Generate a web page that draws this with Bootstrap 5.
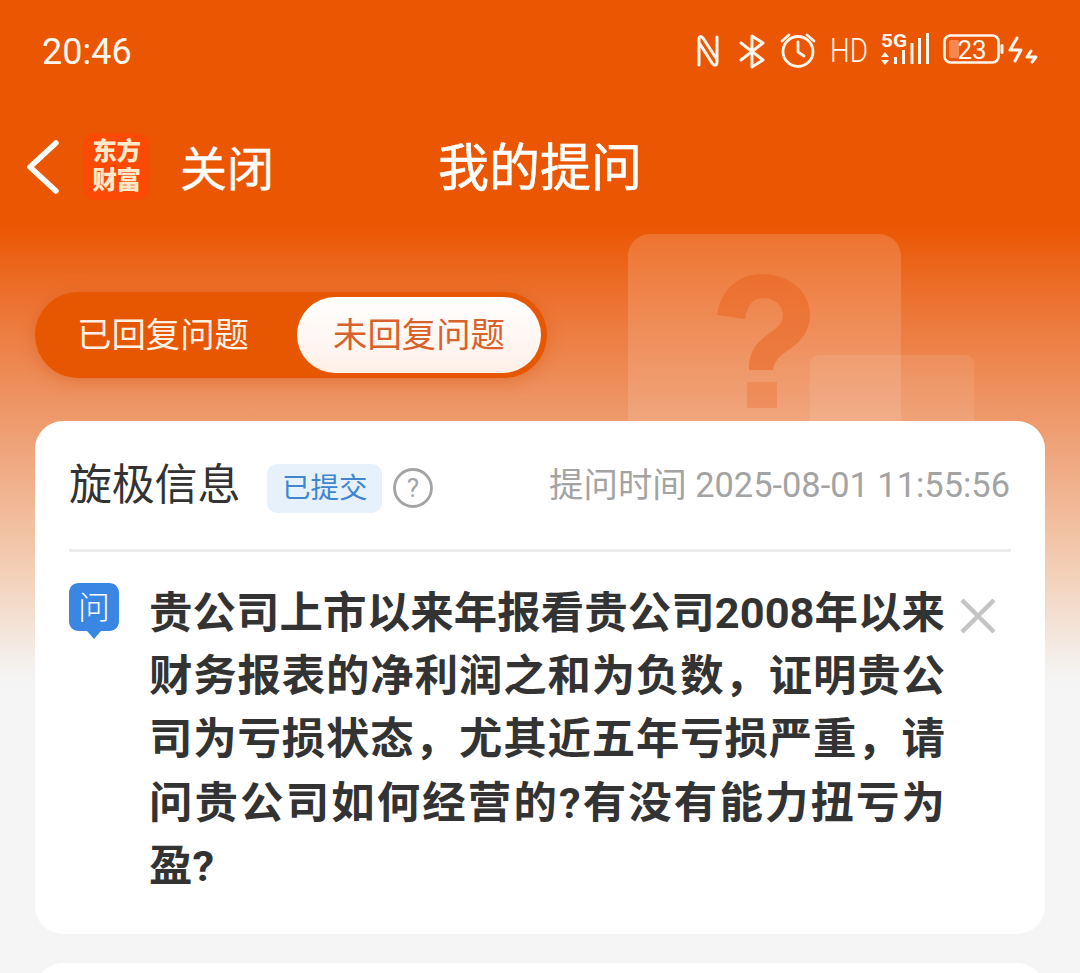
<!DOCTYPE html>
<html lang="zh-CN">
<head>
<meta charset="utf-8">
<title>我的提问</title>
<link rel="stylesheet" href="https://cdn.jsdelivr.net/npm/bootstrap@5.3.0/dist/css/bootstrap.min.css">
<style>
html,body{margin:0;height:973px;overflow:hidden;background:#f5f5f5}
body{font-family:Roboto,"Noto Sans CJK SC","Liberation Sans",sans-serif}
.screen{height:973px;position:relative;overflow:hidden;background:linear-gradient(180deg,#eb5602 0,#eb5602 225px,#ec7230 300px,#ee9a6c 420px,#f3cfb6 570px,#f4f2f0 670px,#f5f5f5 685px)}
.stat-bar{height:102px;padding:0 42px;color:#fff6ee}
.clock{font-size:36px;line-height:1;padding-top:2px}
.stat-svg{display:block;margin-top:-2px}
.title-row{height:135px;padding-bottom:6px;color:#fff;position:relative}
.back-ico{margin-left:27px;margin-right:24px;flex:none}
.app-logo{width:67px;height:67px;border-radius:13px;background:#fb4a06;color:#ffe9c8;font-size:24.5px;line-height:28.5px;font-weight:900;text-align:center;padding-top:5px;letter-spacing:-.5px;flex:none}
.close-txt{font-size:47px;line-height:1;margin-left:30px;margin-top:5px;font-weight:400;-webkit-text-stroke:.4px #fff}
.page-title{font-size:51px;line-height:1;position:absolute;left:438px;top:41px;font-weight:400;-webkit-text-stroke:.6px #fff}
.deco-wrap{position:absolute;left:628px;top:234px;width:346px;height:220px;pointer-events:none}
.switcher{margin:55px 0 0 35px;width:512px;height:86px;border-radius:43px;background:#e75600;box-shadow:0 3px 16px rgba(205,75,0,.35);padding:5px 6px 5px 42px;font-size:34.4px;position:relative}
.switch-off{color:#fff2e4;width:220px;line-height:76px}
.switch-on{width:244px;height:76px;border-radius:38px;background:linear-gradient(180deg,#fff,#fff0e8);color:#d9622c;line-height:76px;text-align:center}
.ask-card{margin:43px 35px 0;height:513px;border:0;border-radius:28px;background:#fff;padding:0 34px;position:relative}
.ask-head{height:131px;border-bottom:3px solid #ededed;padding-top:1px}
.ask-name{font-size:43px;color:#333;line-height:1;letter-spacing:-.2px}
.state-tag{margin:6px 0 0 27px;width:115px;height:49px;border-radius:10px;background:#e7f1fb;color:#3f86cf;font-size:28.5px;line-height:49px;text-align:center}
.help-ico{margin:4px 0 0 10px;flex:none}
.ask-time{font-size:34.4px;color:#a3a3a3;line-height:1;margin-left:auto;margin-right:1px;white-space:nowrap}
.ask-body{padding-top:31px}
.q-badge{width:50px;flex:none}
.q-txt{margin:-1px 0 0 30px;width:796px;flex:none;font-size:43.4px;line-height:63.2px;font-weight:700;color:#333;text-align:justify}
.q-close{margin-left:15px;margin-top:15px;flex:none}
.next-card{margin:29px 35px 0;height:100px;border:0;border-radius:28px 28px 0 0;background:#fff}
</style>
</head>
<body>
<div class="screen">
  <div class="deco-wrap">
    <svg width="346" height="220" viewBox="0 0 346 220">
      <defs>
        <linearGradient id="fadeA" x1="0" y1="0" x2="0" y2="1"><stop offset="0" stop-color="#fff" stop-opacity=".16"/><stop offset="1" stop-color="#fff" stop-opacity=".1"/></linearGradient>
      </defs>
      <rect x="0" y="0" width="273" height="240" rx="22" fill="url(#fadeA)"/>
      <path d="M89 81C93 54 112 40 134 40C161 40 182 57 182 81C182 99 171 109 159 117C149 124 145 130 145 138V136H121V134C121 119 127 110 139 101C149 94 155 90 155 81C155 71 146 64 135 64C124 64 119 73 117 85Z" fill="#ea6520" fill-opacity=".55"/>
      <rect x="119" y="148" width="30" height="26" fill="#ea6520" fill-opacity=".3"/>
      <rect x="182" y="121" width="164" height="130" rx="9" fill="#fff" fill-opacity=".09"/>
    </svg>
  </div>

  <div class="stat-bar d-flex align-items-center justify-content-between">
    <div class="clock">20:46</div>
    <svg class="stat-svg" width="344" height="40" viewBox="694 30 344 40" fill="none" stroke="#fff6ee" stroke-linecap="round" stroke-linejoin="round">
      <g stroke-width="3">
        <path d="M699 65V39C699 36 701 36 703 38L716 58"/>
        <path d="M717 37V62C717 66 714 66 712 63L700 44"/>
      </g>
      <path stroke-width="3" d="M741 43L763 60L752 67V36L763 43L741 60"/>
      <g stroke-width="2.800">
        <circle cx="798" cy="51.500" r="15"/>
        <path d="M798 42V52L804 56"/>
        <path d="M782 41L789 35M814 41L807 35"/>
      </g>
      <text x="830" y="62" font-family="Roboto,sans-serif" font-size="33" font-weight="300" fill="#fff6ee" stroke="none" textLength="38" lengthAdjust="spacingAndGlyphs">HD</text>
      <text x="881" y="47" font-family="Roboto,sans-serif" font-size="19" font-weight="700" fill="#fff6ee" stroke="none" textLength="26" lengthAdjust="spacingAndGlyphs">5G</text>
      <g fill="#fff6ee" stroke="none">
        <path d="M885 52L889 57H881Z M885 65L881 60H889Z"/>
        <rect x="894" y="57" width="3" height="7"/><rect x="902" y="50" width="3" height="14"/><rect x="910.500" y="43" width="3" height="21"/><rect x="918" y="38" width="3" height="26"/><rect x="926" y="33" width="3" height="31"/>
      </g>
      <rect x="944.500" y="35.500" width="54" height="27" rx="6" stroke-width="2.600"/>
      <rect x="949" y="40" width="10" height="18" rx="2" fill="#f5874f" stroke="none"/>
      <rect x="1000.500" y="44" width="3" height="10" rx="1.500" fill="#fff6ee" stroke="none"/>
      <text x="972" y="58.500" text-anchor="middle" font-family="Roboto,sans-serif" font-size="26" font-weight="400" fill="#fff6ee" stroke="none">23</text>
      <g stroke-width="3">
        <path d="M1017 38L1010 50H1021L1015 61"/>
        <path d="M1031 51L1027 57H1036L1032 62"/>
      </g>
    </svg>
  </div>

  <div class="title-row d-flex align-items-center">
    <svg class="back-ico" width="32" height="54" viewBox="0 0 32 54" fill="none" stroke="#fff" stroke-width="5.500" stroke-linecap="round" stroke-linejoin="round"><path d="M29 3L3 27L29 51"/></svg>
    <div class="app-logo">东方<br>财富</div>
    <div class="close-txt">关闭</div>
    <div class="page-title">我的提问</div>
  </div>

  <div class="switcher d-flex align-items-center">
    <div class="switch-off">已回复问题</div>
    <div class="switch-on">未回复问题</div>
  </div>

  <div class="card ask-card">
    <div class="ask-head d-flex align-items-center">
      <div class="ask-name">旋极信息</div>
      <div class="state-tag">已提交</div>
      <svg class="help-ico" width="42" height="42" viewBox="0 0 42 42"><circle cx="21" cy="21" r="18.500" fill="none" stroke="#a3a3a3" stroke-width="2.800"/><text x="21" y="30" text-anchor="middle" font-family="Roboto,sans-serif" font-size="26" fill="#a3a3a3">?</text></svg>
      <div class="ask-time">提问时间 2025-08-01 11:55:56</div>
    </div>
    <div class="ask-body d-flex align-items-start">
      <svg class="q-badge" width="50" height="56" viewBox="0 0 50 56">
        <path d="M10 0H40C46 0 50 4 50 10V38C50 44 46 48 40 48H32L25 56L18 48H10C4 48 0 44 0 38V10C0 4 4 0 10 0Z" fill="#3a86e3"/>
        <text x="25" y="36" text-anchor="middle" font-family="'Noto Sans CJK SC',sans-serif" font-size="32" fill="#fff" font-weight="300">问</text>
      </svg>
      <p class="q-txt">贵公司上市以来年报看贵公司2008年以来财务报表的净利润之和为负数，证明贵公司为亏损状态，尤其近五年亏损严重，请问贵公司如何经营的?有没有能力扭亏为盈?</p>
      <svg class="q-close" width="36" height="36" viewBox="0 0 36 36" fill="none" stroke="#c4c4c4" stroke-width="4.500"><path d="M2 2L34 34M34 2L2 34"/></svg>
    </div>
  </div>
  <div class="card next-card"></div>
</div>
<script src="https://cdn.jsdelivr.net/npm/bootstrap@5.3.0/dist/js/bootstrap.bundle.min.js"></script>
</body>
</html>
